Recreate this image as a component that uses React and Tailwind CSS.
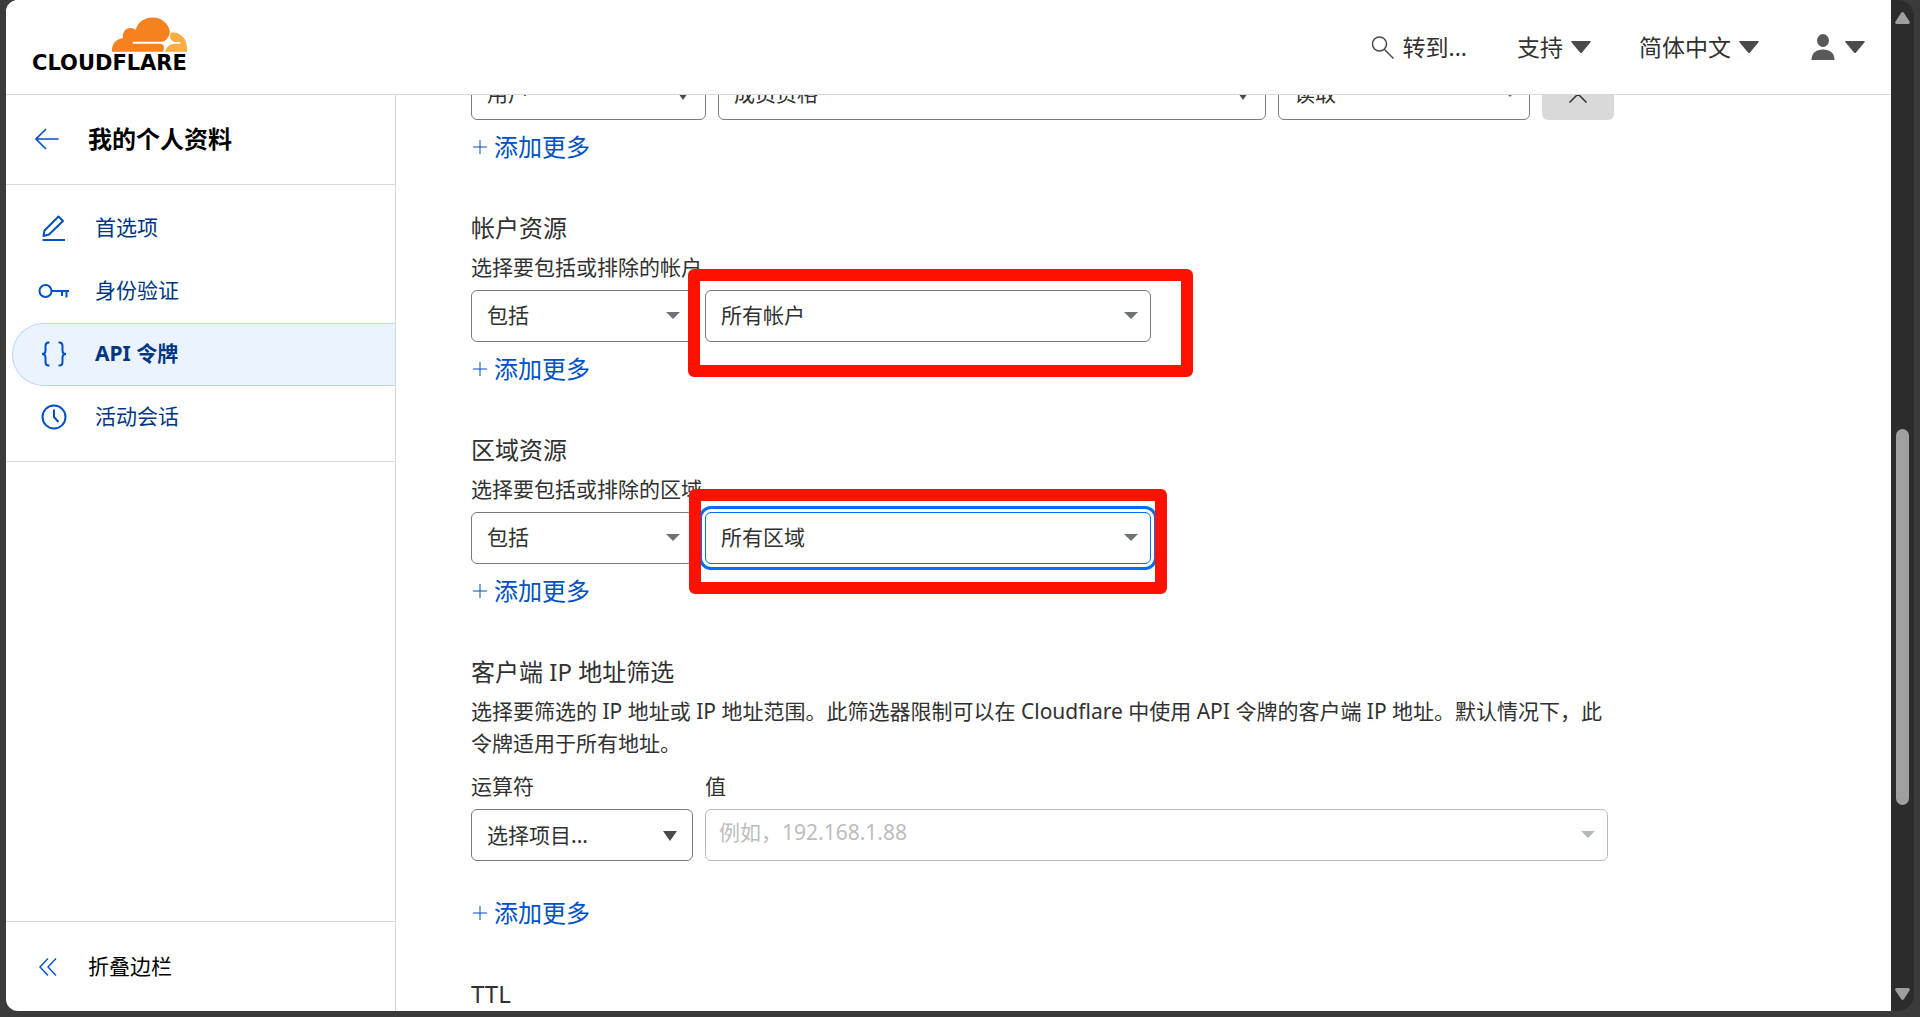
import React from 'react';

// =============================================================
// Cloudflare dashboard — API token editor
// =============================================================

const NAV_ITEMS = [
  { label: '首选项', icon: PencilIcon },
  { label: '身份验证', icon: KeyIcon },
  { label: 'API 令牌', icon: BracesIcon, active: true },
  { label: '活动会话', icon: ClockIcon },
];

export default function App() {
  return (
    <div
      className="h-screen flex flex-col bg-[#3b3b3b] pl-[6px] pr-[6px] pb-[6px] text-[#313131]"
      style={{ fontFamily: "'Noto Sans', 'Noto Sans CJK SC', sans-serif" }}
    >
      <div className="flex-1 min-h-0 flex">
        <div className="flex-1 min-w-0 flex flex-col bg-white rounded-l-xl overflow-hidden">
          <TopBar />
          <div className="flex-1 min-h-0 flex">
            <Sidebar />
            <TokenForm />
          </div>
        </div>
        <ScrollRail />
      </div>
    </div>
  );
}

// =============================================================
// Header
// =============================================================
function TopBar() {
  return (
    <header className="flex items-center justify-between h-[95px] shrink-0 pl-[26px] pr-[26px] border-b border-[#d9d9d9] bg-white">
      <a href="#" className="flex flex-col items-end pb-1 text-black" aria-label="Cloudflare">
        <CloudMark />
        <span
          className="text-[21px] leading-[22px] font-bold"
          style={{ fontFamily: "'DejaVu Sans', sans-serif" }}
        >
          CLOUDFLARE
        </span>
      </a>
      <nav className="flex items-center text-[23px] leading-[32px]">
        <button className="flex items-center gap-2">
          <svg className="w-6 h-6" viewBox="0 0 24 24" fill="none" stroke="#4a4a4a" strokeWidth="1.5">
            <circle cx="8.5" cy="9" r="7" />
            <path d="M13.5 14.5 L22.5 23.5" />
          </svg>
          转到...
        </button>
        <button className="flex items-center gap-2 ml-[50px]">
          支持
          <HeaderCaret />
        </button>
        <button className="flex items-center gap-2 ml-[48px]">
          简体中文
          <HeaderCaret />
        </button>
        <button className="flex items-center gap-[10px] ml-[52px]" aria-label="User">
          <svg className="w-6 h-[26px]" viewBox="0 0 24 26" fill="#595959">
            <ellipse cx="12" cy="6.5" rx="6" ry="6.5" />
            <path d="M0.5 26 C0.5 19 5 15.5 12 15.5 C19 15.5 23.5 19 23.5 26 Z" />
          </svg>
          <HeaderCaret />
        </button>
      </nav>
    </header>
  );
}

function HeaderCaret() {
  return (
    <svg className="w-5 h-3" viewBox="0 0 20 12" fill="#4a4a4a">
      <path d="M1 0 H19 Q20.500 0 19.500 1.300 L11 11.500 Q10 12.500 9 11.500 L0.500 1.300 Q-0.500 0 1 0 Z" />
    </svg>
  );
}

function CloudMark() {
  return (
    <svg className="w-[75px] h-[35px]" viewBox="0 0 224 103">
      <path
        fill="#f6821f"
        d="M0 103 C-2 82 12 64 33 63 C29 45 42 31 56 32 C62 32 68 35 71 38 C76 15 98 1 122 1 C148 1 168 18 173 43 C172 54 168 64 160 74 C161 84 157 94 153 103 Z"
      />
      <path
        fill="#fbad41"
        d="M175 46 C204 42 224 64 224 92 V103 H158 C158 94 165 84 178 78 C178 70 172 68 173 56 Z"
      />
      <path
        fill="#fff"
        d="M62 73 H146 C156 73 166 68 171 52 C174 68 180 73 190 74 H204 V79 H186 C172 80 164 88 158 103 H153 C157 88 156 80 144 79 H62 Z"
      />
    </svg>
  );
}

// =============================================================
// Sidebar
// =============================================================
function Sidebar() {
  return (
    <aside className="w-[390px] shrink-0 flex flex-col border-r border-[#d9d9d9]">
      <div className="flex items-center h-[90px] pb-[2px] pl-[29px] border-b border-[#d9d9d9]">
        <a href="#" aria-label="返回" className="w-[53px]">
          <svg className="w-6 h-6" viewBox="0 0 24 24" fill="none" stroke="#0051c3" strokeWidth="1.6">
            <path d="M11 2 L1 12 L11 22 M1 12 H23.500" />
          </svg>
        </a>
        <h1 className="text-[24px] leading-[32px] font-bold text-black">我的个人资料</h1>
      </div>

      <nav className="py-3 border-b border-[#d9d9d9] text-[21px]">
        {NAV_ITEMS.map(({ label, icon: Icon, active }) => (
          <a
            key={label}
            href="#"
            className={
              'flex items-center h-[63px] ml-[6px] pl-[25px] pb-[2px] rounded-l-full border border-r-0 text-[#003682] ' +
              (active ? 'font-bold bg-[#ebf3ff] border-[#b9d6ff]' : 'border-transparent')
            }
          >
            <span className="w-[57px] flex">
              <Icon />
            </span>
            {label}
          </a>
        ))}
      </nav>

      <button className="mt-auto flex items-center h-[90px] pl-[29px] border-t border-[#d9d9d9] text-[21px] text-black">
        <span className="w-[53px] pl-1">
          <svg className="w-[18px] h-[18px]" viewBox="0 0 18 18" fill="none" stroke="#0051c3" strokeWidth="1.400">
            <path d="M9 0.500 L1 9 L9 17.500 M17 0.500 L9 9 L17 17.500" />
          </svg>
        </span>
        折叠边栏
      </button>
    </aside>
  );
}

function NavSvg({ children }) {
  return (
    <svg
      className="w-8 h-8"
      viewBox="0 0 32 32"
      fill="none"
      stroke="#0051c3"
      strokeWidth="2"
      aria-hidden="true"
    >
      {children}
    </svg>
  );
}

function PencilIcon() {
  return (
    <NavSvg>
      <path d="M5.500 24 L6.500 18.500 L20.500 4.500 L25 9 L11 22.500 Z" strokeLinejoin="round" />
      <path d="M4.500 28 H27" />
    </NavSvg>
  );
}

function KeyIcon() {
  return (
    <NavSvg>
      <circle cx="7.500" cy="16" r="6" />
      <path d="M13.500 16 H31 M24 16 V21 M28.500 16 V22.500" />
    </NavSvg>
  );
}

function BracesIcon() {
  return (
    <NavSvg>
      <path d="M11.500 4.500 H10.500 Q7.500 4.500 7.500 8 V12.500 Q7.500 16 4 16 Q7.500 16 7.500 19.500 V24 Q7.500 27.500 10.500 27.500 H11.500" />
      <path d="M20.500 4.500 H21.500 Q24.500 4.500 24.500 8 V12.500 Q24.500 16 28 16 Q24.500 16 24.500 19.500 V24 Q24.500 27.500 21.500 27.500 H20.500" />
    </NavSvg>
  );
}

function ClockIcon() {
  return (
    <NavSvg>
      <circle cx="16" cy="16" r="11.500" />
      <path d="M16 8.500 V16 L20.500 21" />
    </NavSvg>
  );
}

// =============================================================
// Token form, scrolled part-way down
// =============================================================
function TokenForm() {
  return (
    <main className="flex-1 min-w-0 overflow-hidden pl-[75px] pr-6">
      <div className="-mt-[27px] max-w-[1143px] flex flex-col gap-[45px]">
        <section>
          <div className="flex gap-3">
            <SelectBox label="权限类型" value="用户" width="w-[235px]" dark />
            <SelectBox label="权限" value="成员资格" width="flex-1" dark />
            <SelectBox label="访问级别" value="读取" width="w-[252px]" />
            <button
              aria-label="删除"
              className="w-[72px] h-[52px] rounded-md bg-[#d9d9d9] flex items-center justify-center"
            >
              <svg className="w-[18px] h-[18px]" viewBox="0 0 18 18" stroke="#313131" strokeWidth="1.500">
                <path d="M0.500 0.500 L17.500 17.500 M17.500 0.500 L0.500 17.500" />
              </svg>
            </button>
          </div>
          <AddMore />
        </section>

        <section>
          <SectionTitle>帐户资源</SectionTitle>
          <p className="mt-[5px] text-[21px] leading-[32px]">选择要包括或排除的帐户</p>
          <div className="mt-[7px] flex gap-3">
            <SelectBox label="帐户条件" value="包括" width="w-[222px]" />
            <div className="relative">
              <SelectBox label="帐户" value="所有帐户" width="w-[446px]" />
              <Highlight place="-left-[17px] -top-[21px] -right-[42px] -bottom-[35px]" />
            </div>
          </div>
          <AddMore />
        </section>

        <section>
          <SectionTitle>区域资源</SectionTitle>
          <p className="mt-[5px] text-[21px] leading-[32px]">选择要包括或排除的区域</p>
          <div className="mt-[7px] flex gap-3">
            <SelectBox label="区域条件" value="包括" width="w-[222px]" />
            <div className="relative">
              <SelectBox label="区域" value="所有区域" width="w-[446px]" focused />
              <Highlight place="-left-4 -top-[23px] -right-4 -bottom-[30px]" />
            </div>
          </div>
          <AddMore />
        </section>

        <section>
          <SectionTitle>客户端 IP 地址筛选</SectionTitle>
          <p className="mt-[5px] text-[21px] leading-[32px]">
            选择要筛选的 IP 地址或 IP 地址范围。此筛选器限制可以在 Cloudflare 中使用 API
            令牌的客户端 IP 地址。默认情况下，此令牌适用于所有地址。
          </p>
          <div className="mt-[11px] mb-[34px] mr-[6px] flex gap-3 text-[21px] leading-[32px]">
            <div>
              <label htmlFor="operator">运算符</label>
              <div className="mt-[7px]">
                <SelectBox id="operator" value="选择项目..." width="w-[222px]" dark />
              </div>
            </div>
            <div className="flex-1">
              <label htmlFor="ip-value">值</label>
              <div className="mt-[7px] relative">
                <input
                  id="ip-value"
                  disabled
                  placeholder="例如，192.168.1.88"
                  className="w-full h-[52px] pl-[13px] pr-9 pb-[6px] rounded-md border border-[#bcbcbc] bg-white placeholder:text-[#bdbdbd]"
                />
                <Caret className="text-[#b6b9bc]" />
              </div>
            </div>
          </div>
          <AddMore />
        </section>

        <section>
          <SectionTitle>TTL</SectionTitle>
        </section>
      </div>
    </main>
  );
}

function SectionTitle({ children }) {
  return <h2 className="text-[24px] leading-[36px]">{children}</h2>;
}

function AddMore() {
  return (
    <button className="mt-[9px] flex items-center gap-[7px] pl-[2px] text-[24px] leading-[36px] text-[#0051c3]">
      <svg className="w-[14px] h-[14px]" viewBox="0 0 14 14" stroke="currentColor" strokeWidth="1">
        <path d="M7 0 V14 M0 7 H14" />
      </svg>
      添加更多
    </button>
  );
}

function SelectBox({ id, label, value, width, dark, focused }) {
  return (
    <div className={'relative ' + width}>
      <select
        id={id}
        aria-label={label}
        className={
          'appearance-none block w-full h-[52px] pl-[15px] pr-9 rounded-md border bg-white text-[21px] ' +
          (focused
            ? 'border-[#006dff] outline-3 outline-offset-3 outline-[#006dff]'
            : 'border-[#797979]')
        }
      >
        <option>{value}</option>
      </select>
      {dark ? <DarkCaret /> : <Caret className="text-[#6f7377]" />}
    </div>
  );
}

function Caret({ className }) {
  return (
    <svg
      className={'absolute right-[13px] top-[22px] w-[14px] h-[7px] pointer-events-none ' + className}
      viewBox="0 0 14 7"
      fill="currentColor"
    >
      <path d="M0 0 H14 L7 7 Z" />
    </svg>
  );
}

function DarkCaret() {
  return (
    <svg
      className="absolute right-4 top-[22px] w-[14px] h-[10px] pointer-events-none"
      viewBox="0 0 14 10"
      fill="#4a4a4a"
    >
      <path d="M0 0 H14 L7 10 Z" />
    </svg>
  );
}

// Red marker box drawn over a field
function Highlight({ place }) {
  return (
    <div
      className={'absolute z-10 pointer-events-none rounded-md border-12 border-[#ff1100] ' + place}
    />
  );
}

// =============================================================
// Window scroll bar
// =============================================================
function ScrollRail() {
  return (
    <div className="w-[23px] shrink-0 flex flex-col items-center pt-[12px] pb-[11px] pr-[1px] rounded-r-2xl bg-[#2c2c2c]">
      <svg className="w-[15px] h-3" viewBox="0 0 15 12" fill="#9f9f9f">
        <path d="M6 1 Q7.500 -1 9 1 L14.500 9.500 Q15.500 12 13 12 H2 Q-0.500 12 0.500 9.500 Z" />
      </svg>
      <div className="flex-1 flex flex-col items-center">
        <div className="basis-[42%] grow-0 shrink-0" />
        <div className="basis-[39%] w-[13px] rounded-full bg-[#9f9f9f]" />
      </div>
      <svg className="w-[15px] h-3" viewBox="0 0 15 12" fill="#9f9f9f">
        <path d="M6 11 Q7.500 13 9 11 L14.500 2.500 Q15.500 0 13 0 H2 Q-0.500 0 0.500 2.500 Z" />
      </svg>
    </div>
  );
}
